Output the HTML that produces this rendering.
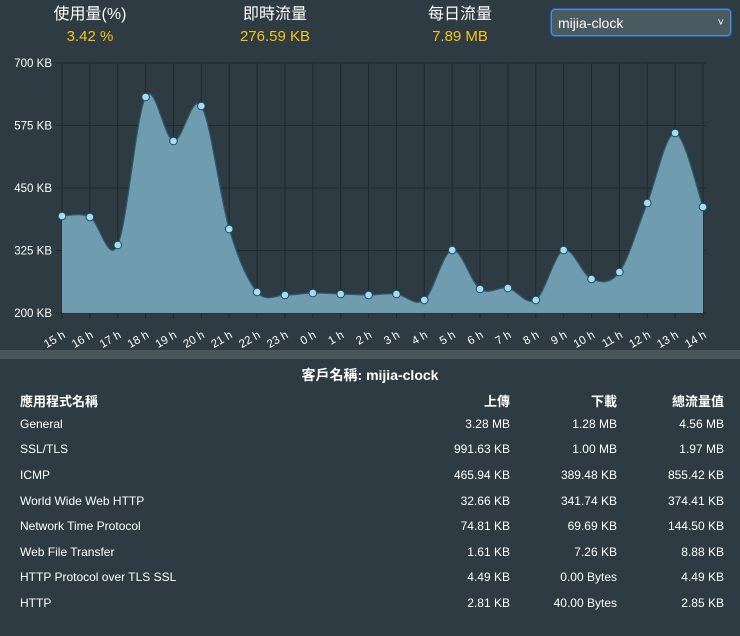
<!DOCTYPE html>
<html><head><meta charset="utf-8"><style>
body{margin:0;width:740px;height:636px;background:#2e3b42;font-family:"Liberation Sans","Noto Sans CJK TC",sans-serif;color:#fff;overflow:hidden;position:relative}
.h{position:absolute;text-align:center;font-size:16px;color:#fff}
.v{position:absolute;text-align:center;font-size:15px;color:#f5c518}
.sel{position:absolute;left:551px;top:9px;width:180px;height:27px;border:1px solid #4d8fd9;border-radius:4px;background:#4b5a60;box-shadow:0 0 0 1px #2a5f9e;font-size:14px;line-height:27px;padding-left:6px;box-sizing:border-box}
.sel span{position:absolute;right:6px;top:0;font-size:11px}
.band{position:absolute;left:0;top:350px;width:740px;height:9px;background:#4a565c}
.title{position:absolute;top:365px;width:740px;text-align:center;font-weight:bold;font-size:14px}
table{position:absolute;left:20px;top:389px;width:704px;border-collapse:collapse;font-size:12px;table-layout:fixed}
td{height:25.6px;padding:0}
td.r{text-align:right}
tr.hd td{font-weight:bold;font-size:13px;height:22px}
</style></head><body>
<div class="h" style="left:40px;width:100px;top:0px">使用量(%)</div>
<div class="v" style="left:40px;width:100px;top:28px">3.42 %</div>
<div class="h" style="left:220px;width:110px;top:0px">即時流量</div>
<div class="v" style="left:220px;width:110px;top:28px">276.59 KB</div>
<div class="h" style="left:405px;width:110px;top:0px">每日流量</div>
<div class="v" style="left:405px;width:110px;top:28px">7.89 MB</div>
<div class="sel">mijia-clock<span>&#x2C5;</span></div>
<svg id="c" width="740" height="350" style="position:absolute;left:0;top:0" font-family="Liberation Sans" font-size="11.5" fill="#fff"></svg>
<div class="band"></div>
<div class="title">客戶名稱: mijia-clock</div>
<table>
<colgroup><col style="width:390px"><col style="width:100px"><col style="width:107px"><col style="width:107px"></colgroup>
<tr class="hd"><td>應用程式名稱</td><td class="r">上傳</td><td class="r">下載</td><td class="r">總流量值</td></tr>
<tr><td>General</td><td class="r">3.28 MB</td><td class="r">1.28 MB</td><td class="r">4.56 MB</td></tr>
<tr><td>SSL/TLS</td><td class="r">991.63 KB</td><td class="r">1.00 MB</td><td class="r">1.97 MB</td></tr>
<tr><td>ICMP</td><td class="r">465.94 KB</td><td class="r">389.48 KB</td><td class="r">855.42 KB</td></tr>
<tr><td>World Wide Web HTTP</td><td class="r">32.66 KB</td><td class="r">341.74 KB</td><td class="r">374.41 KB</td></tr>
<tr><td>Network Time Protocol</td><td class="r">74.81 KB</td><td class="r">69.69 KB</td><td class="r">144.50 KB</td></tr>
<tr><td>Web File Transfer</td><td class="r">1.61 KB</td><td class="r">7.26 KB</td><td class="r">8.88 KB</td></tr>
<tr><td>HTTP Protocol over TLS SSL</td><td class="r">4.49 KB</td><td class="r">0.00 Bytes</td><td class="r">4.49 KB</td></tr>
<tr><td>HTTP</td><td class="r">2.81 KB</td><td class="r">40.00 Bytes</td><td class="r">2.85 KB</td></tr>
</table>
<script>
var ys=[216,217,245,97,141,106,229,292,295,293,294,295,294,300,250,289,288,300,250,279,272,203,133,207];
var lb=["15","16","17","18","19","20","21","22","23","0","1","2","3","4","5","6","7","8","9","10","11","12","13","14"];
var x0=62,st=(703-62)/23,s="";
var P=ys.map(function(y,i){return[x0+i*st,y]});
for(var i=0;i<5;i++){var y=63+i*62.5;s+='<line x1="56" x2="706" y1="'+y+'" y2="'+y+'" stroke="#1f292e"/>';s+='<text x="52" y="'+(y+4)+'" text-anchor="end">'+(700-i*125)+' KB</text>';}
for(var i=0;i<24;i++){var x=P[i][0];s+='<line x1="'+x+'" x2="'+x+'" y1="63" y2="318" stroke="#1f292e"/>';s+='<text transform="translate('+(x+4)+',337) rotate(-30)" text-anchor="end">'+lb[i]+' h</text>';}
var d="M"+P[0][0]+","+P[0][1];
for(var i=0;i<23;i++){var p0=P[Math.max(i-1,0)],p1=P[i],p2=P[i+1],p3=P[Math.min(i+2,23)];
d+=" C"+(p1[0]+(p2[0]-p0[0])/6)+","+(p1[1]+(p2[1]-p0[1])/6)+" "+(p2[0]-(p3[0]-p1[0])/6)+","+(p2[1]-(p3[1]-p1[1])/6)+" "+p2[0]+","+p2[1];}
s+='<path d="'+d+' L703,313 L62,313 Z" fill="#6f9cae"/>';
s+='<path d="'+d+'" fill="none" stroke="#2b5b70" stroke-width="1.2"/>';
P.forEach(function(p){s+='<circle cx="'+p[0]+'" cy="'+p[1]+'" r="3.8" fill="#a6dcf2" stroke="#1f4a5e" stroke-width="1"/>'});
document.getElementById("c").innerHTML=s;
</script>
</body></html>
